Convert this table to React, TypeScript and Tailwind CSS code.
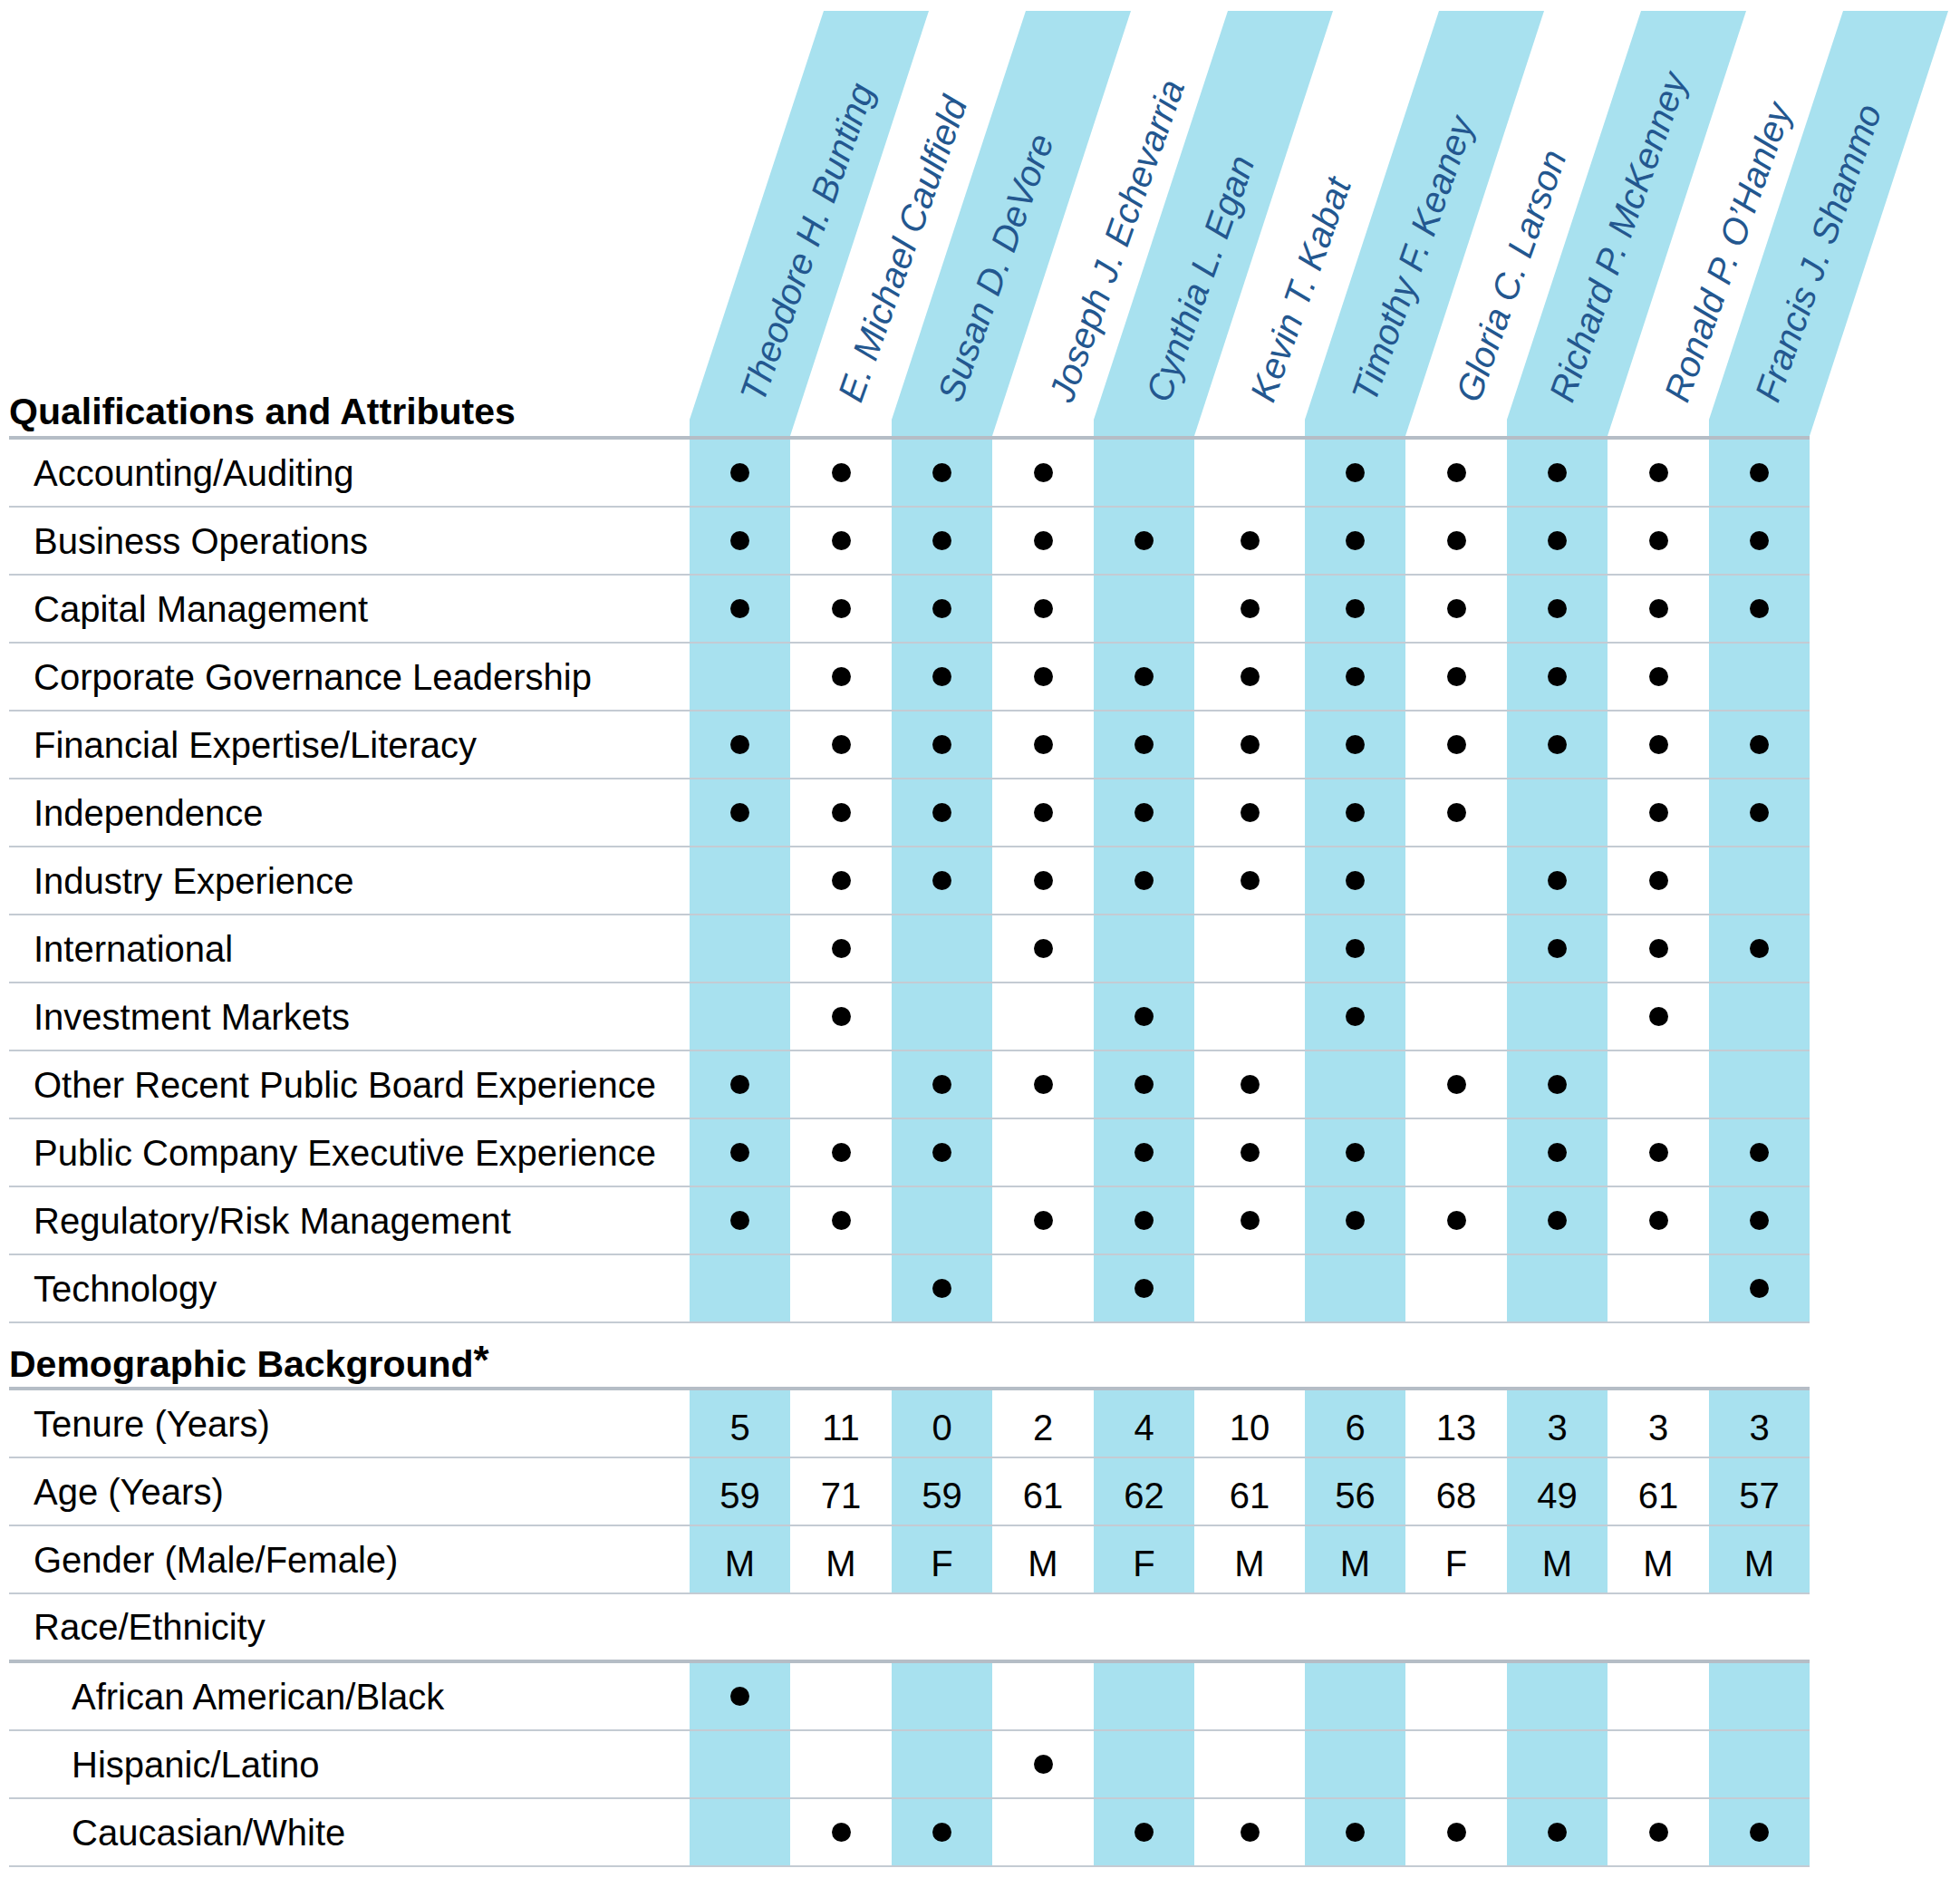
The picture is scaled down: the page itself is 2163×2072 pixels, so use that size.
const GRID =
  "grid grid-cols-[751px_111px_112px_111px_112px_111px_122px_111px_112px_111px_112px_111px]";

const BLUE = "bg-[#a8e1ef]";

const directors = [
  { name: "Theodore H. Bunting", pos: "left-[81px]" },
  { name: "E. Michael Caulfield", pos: "left-[78px]" },
  { name: "Susan D. DeVore", pos: "left-[76px]" },
  { name: "Joseph J. Echevarria", pos: "left-[88px]" },
  { name: "Cynthia L. Egan", pos: "left-[83px]" },
  { name: "Kevin T. Kabat", pos: "left-[87px]" },
  { name: "Timothy F. Keaney", pos: "left-[77px]" },
  { name: "Gloria C. Larson", pos: "left-[81px]" },
  { name: "Richard P. McKenney", pos: "left-[72px]" },
  { name: "Ronald P. O\u2019Hanley", pos: "left-[88px]" },
  { name: "Francis J. Shammo", pos: "left-[76px]" },
];

const qualifications: [string, number[]][] = [
  ["Accounting/Auditing", [1, 1, 1, 1, 0, 0, 1, 1, 1, 1, 1]],
  ["Business Operations", [1, 1, 1, 1, 1, 1, 1, 1, 1, 1, 1]],
  ["Capital Management", [1, 1, 1, 1, 0, 1, 1, 1, 1, 1, 1]],
  ["Corporate Governance Leadership", [0, 1, 1, 1, 1, 1, 1, 1, 1, 1, 0]],
  ["Financial Expertise/Literacy", [1, 1, 1, 1, 1, 1, 1, 1, 1, 1, 1]],
  ["Independence", [1, 1, 1, 1, 1, 1, 1, 1, 0, 1, 1]],
  ["Industry Experience", [0, 1, 1, 1, 1, 1, 1, 0, 1, 1, 0]],
  ["International", [0, 1, 0, 1, 0, 0, 1, 0, 1, 1, 1]],
  ["Investment Markets", [0, 1, 0, 0, 1, 0, 1, 0, 0, 1, 0]],
  ["Other Recent Public Board Experience", [1, 0, 1, 1, 1, 1, 0, 1, 1, 0, 0]],
  ["Public Company Executive Experience", [1, 1, 1, 0, 1, 1, 1, 0, 1, 1, 1]],
  ["Regulatory/Risk Management", [1, 1, 0, 1, 1, 1, 1, 1, 1, 1, 1]],
  ["Technology", [0, 0, 1, 0, 1, 0, 0, 0, 0, 0, 1]],
];

const demographics: [string, string[]][] = [
  ["Tenure (Years)", ["5", "11", "0", "2", "4", "10", "6", "13", "3", "3", "3"]],
  ["Age (Years)", ["59", "71", "59", "61", "62", "61", "56", "68", "49", "61", "57"]],
  ["Gender (Male/Female)", ["M", "M", "F", "M", "F", "M", "M", "F", "M", "M", "M"]],
];

const ethnicity: [string, number[]][] = [
  ["African American/Black", [1, 0, 0, 0, 0, 0, 0, 0, 0, 0, 0]],
  ["Hispanic/Latino", [0, 0, 0, 1, 0, 0, 0, 0, 0, 0, 0]],
  ["Caucasian/White", [0, 1, 1, 0, 1, 1, 1, 1, 1, 1, 1]],
];

function Dot() {
  return <span className="block h-[21px] w-[21px] rounded-full bg-black" />;
}

function Row({
  label,
  cells,
  sub = false,
}: {
  label: string;
  cells: React.ReactNode[];
  sub?: boolean;
}) {
  return (
    <div className={`${GRID} h-[75px] border-b-2 border-[#c4cbd3]`}>
      <div className={`flex items-center ${sub ? "pl-[69px]" : "pl-[27px]"}`}>{label}</div>
      {cells.map((c, i) => (
        <div
          key={i}
          className={`flex items-center justify-center ${i % 2 === 0 ? BLUE : ""}`}
        >
          {c}
        </div>
      ))}
    </div>
  );
}

export default function App() {
  return (
    <div className="min-h-screen w-full bg-white font-['Liberation_Sans',Arial,sans-serif] text-[40px] leading-none text-black">
      <div className="ml-[10px] w-[1987px]">
        {/* slanted name header */}
        <div className={`${GRID} h-[485px] border-b-4 border-[#b5bdc6]`}>
          <div className="flex items-end pb-[6px]">
            <h2 className="text-[41px] font-bold">Qualifications and Attributes</h2>
          </div>
          {directors.map((d, i) => (
            <div key={d.name} className="relative">
              {i % 2 === 0 ? (
                <div
                  className={`absolute left-0 top-[12px] bottom-0 w-[270px] ${BLUE} [clip-path:polygon(0_100%,0_451px,148px_0,264px_0,111px_100%)]`}
                />
              ) : null}
              <div className={`absolute top-[446px] z-10 h-0 w-0 -rotate-[70.5deg] ${d.pos}`}>
                <span className="absolute bottom-[-6px] left-0 whitespace-nowrap text-[40px] italic text-[#23578f]">
                  {d.name}
                </span>
              </div>
            </div>
          ))}
        </div>

        {qualifications.map(([label, marks]) => (
          <Row key={label} label={label} cells={marks.map((m) => (m ? <Dot /> : null))} />
        ))}

        <div className="flex h-[74px] items-end border-b-4 border-[#b5bdc6] pb-[4px]">
          <h2 className="text-[41px] font-bold">
            Demographic Background
            <span className="relative -top-[3px] text-[44px]">*</span>
          </h2>
        </div>

        {demographics.map(([label, values]) => (
          <Row
            key={label}
            label={label}
            cells={values.map((v) => (
              <span className="pt-[8px]">{v}</span>
            ))}
          />
        ))}

        <div className="flex h-[76px] items-center border-b-4 border-[#b5bdc6] pl-[27px]">
          Race/Ethnicity
        </div>

        {ethnicity.map(([label, marks]) => (
          <Row key={label} label={label} sub cells={marks.map((m) => (m ? <Dot /> : null))} />
        ))}
      </div>
    </div>
  );
}
